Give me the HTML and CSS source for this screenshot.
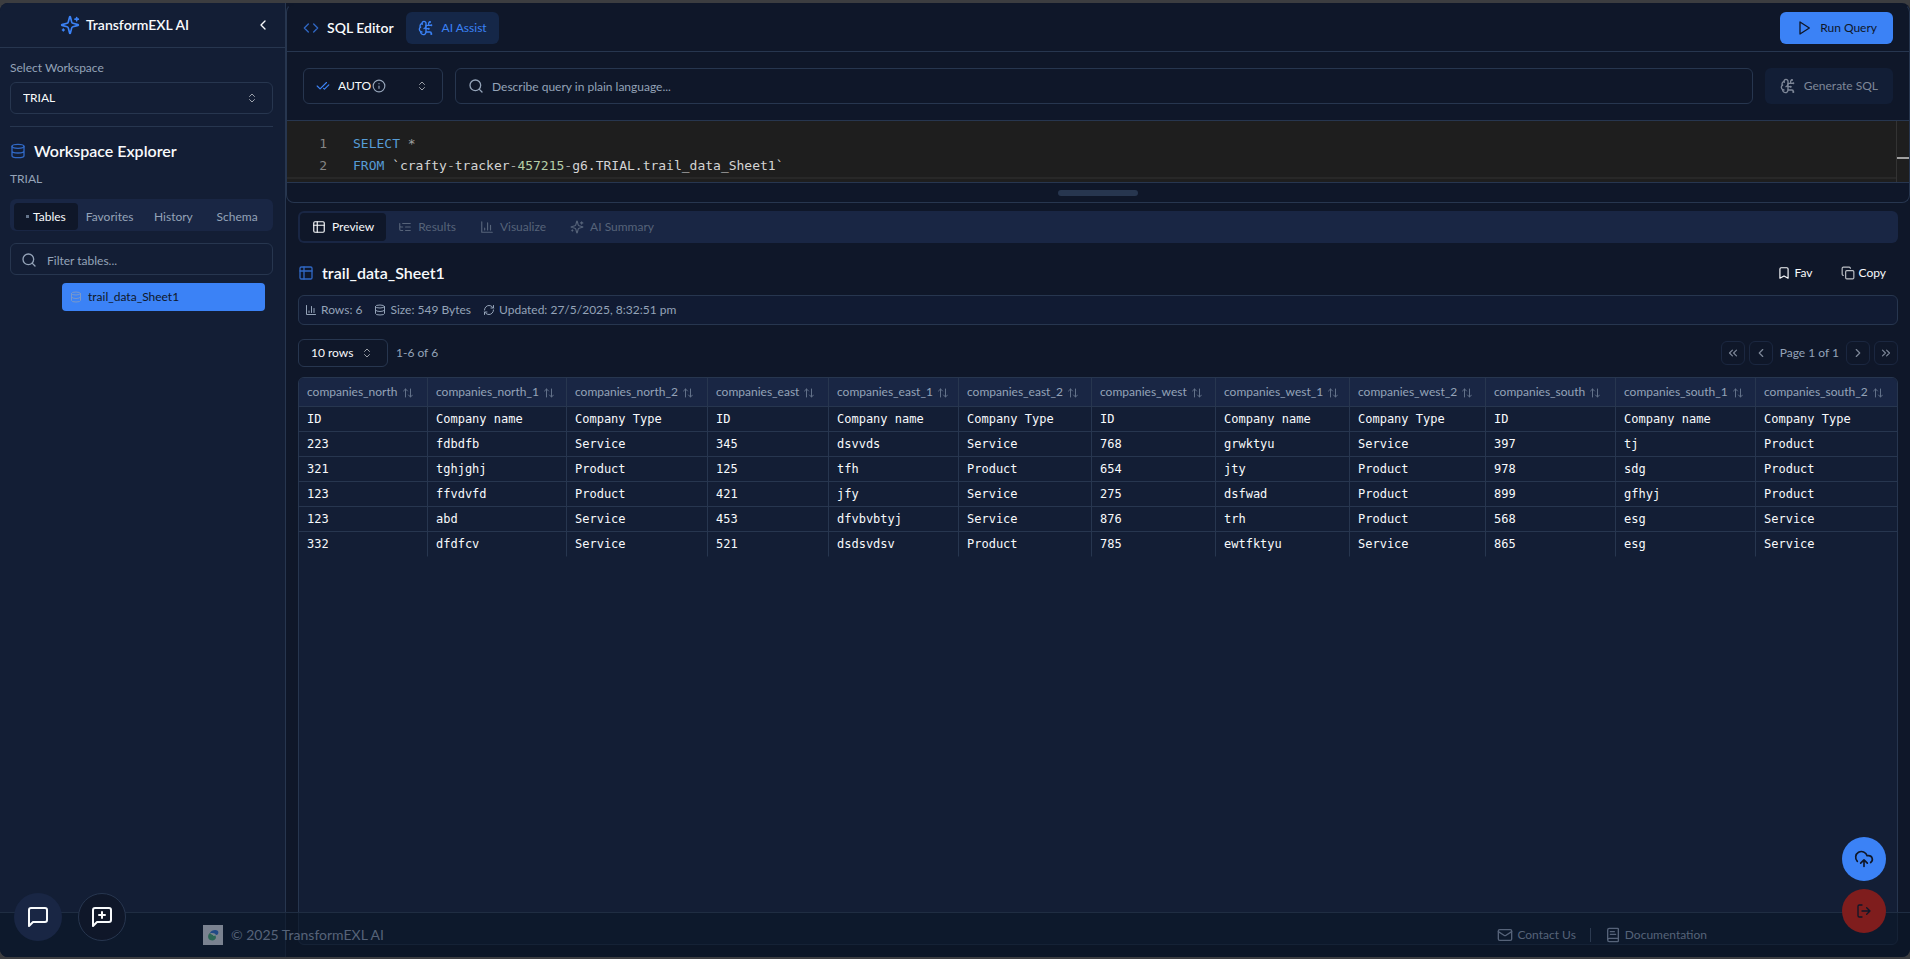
FILE: index.html
```html
<!DOCTYPE html>
<html lang="en">
<head>
  <meta charset="UTF-8">
  <meta name="viewport" content="width=device-width, initial-scale=1">
  <title>TransformEXL AI</title>
  <link rel="stylesheet" href="styles.css">
</head>
<body>
  <!-- icon sprite -->
  <svg class="sprite" aria-hidden="true">
    <symbol id="i-sparkles" viewBox="0 0 24 24"><path d="M9.937 15.5A2 2 0 0 0 8.5 14.063l-6.135-1.582a.5.5 0 0 1 0-.962L8.5 9.936A2 2 0 0 0 9.937 8.5l1.582-6.135a.5.5 0 0 1 .963 0L14.063 8.5A2 2 0 0 0 15.5 9.937l6.135 1.581a.5.5 0 0 1 0 .964L15.5 14.063a2 2 0 0 0-1.437 1.437l-1.582 6.135a.5.5 0 0 1-.963 0z"/><path d="M20 3v4M22 5h-4M4 17v2M5 18H3"/></symbol>
    <symbol id="i-left" viewBox="0 0 24 24"><path d="m15 18-6-6 6-6"/></symbol>
    <symbol id="i-right" viewBox="0 0 24 24"><path d="m9 18 6-6-6-6"/></symbol>
    <symbol id="i-first" viewBox="0 0 24 24"><path d="m11 17-5-5 5-5M18 17l-5-5 5-5"/></symbol>
    <symbol id="i-last" viewBox="0 0 24 24"><path d="m6 17 5-5-5-5M13 17l5-5-5-5"/></symbol>
    <symbol id="i-updown" viewBox="0 0 24 24"><path d="m7 15 5 5 5-5M7 9l5-5 5 5"/></symbol>
    <symbol id="i-db" viewBox="0 0 24 24"><ellipse cx="12" cy="5" rx="9" ry="3"/><path d="M3 5v14a9 3 0 0 0 18 0V5M3 12a9 3 0 0 0 18 0"/></symbol>
    <symbol id="i-search" viewBox="0 0 24 24"><circle cx="11" cy="11" r="8"/><path d="m21 21-4.300-4.300"/></symbol>
    <symbol id="i-code" viewBox="0 0 24 24"><path d="m16 18 6-6-6-6M8 6l-6 6 6 6"/></symbol>
    <symbol id="i-brain" viewBox="0 0 24 24"><path d="M12 5a3 3 0 1 0-5.997.125 4 4 0 0 0-2.526 5.770 4 4 0 0 0 .556 6.588A4 4 0 1 0 12 18Z"/><path d="M9 13a4.500 4.500 0 0 0 3-4M6.003 5.125A3 3 0 0 0 6.401 6.500M3.477 10.896a4 4 0 0 1 .585-.396M6 18a4 4 0 0 1-1.967-.516M12 13h4M12 18h6a2 2 0 0 1 2 2v1M12 8h8M16 8V5a2 2 0 0 1 2-2"/><circle cx="16" cy="13" r=".5"/><circle cx="18" cy="3" r=".5"/><circle cx="20" cy="21" r=".5"/><circle cx="20" cy="8" r=".5"/></symbol>
    <symbol id="i-play" viewBox="0 0 24 24"><path d="m6 3 14 9-14 9z"/></symbol>
    <symbol id="i-checks" viewBox="0 0 24 24"><path d="M18 6 7 17l-5-5M22 10l-7.500 7.500L13 16"/></symbol>
    <symbol id="i-info" viewBox="0 0 24 24"><circle cx="12" cy="12" r="10"/><path d="M12 16v-4M12 8h.01"/></symbol>
    <symbol id="i-table" viewBox="0 0 24 24"><rect x="3" y="3" width="18" height="18" rx="2"/><path d="M9 3v18M3 9h18"/></symbol>
    <symbol id="i-list" viewBox="0 0 24 24"><path d="M21 12h-8M21 6H8M21 18h-8M3 6v4c0 1.100.900 2 2 2h3M3 10v6c0 1.100.900 2 2 2h3"/></symbol>
    <symbol id="i-chart" viewBox="0 0 24 24"><path d="M3 3v18h18M18 17V9M13 17V5M8 17v-3"/></symbol>
    <symbol id="i-bookmark" viewBox="0 0 24 24"><path d="m19 21-7-4-7 4V5a2 2 0 0 1 2-2h10a2 2 0 0 1 2 2z"/></symbol>
    <symbol id="i-copy" viewBox="0 0 24 24"><rect x="8" y="8" width="14" height="14" rx="2"/><path d="M4 16c-1.100 0-2-.900-2-2V4c0-1.100.900-2 2-2h10c1.100 0 2 .900 2 2"/></symbol>
    <symbol id="i-refresh" viewBox="0 0 24 24"><path d="M3 12a9 9 0 0 1 9-9 9.750 9.750 0 0 1 6.740 2.740L21 8M21 3v5h-5M21 12a9 9 0 0 1-9 9 9.750 9.750 0 0 1-6.740-2.740L3 16M8 16H3v5"/></symbol>
    <symbol id="i-sort" viewBox="0 0 24 24"><path d="m3 8 4-4 4 4M7 4v16M21 16l-4 4-4-4M17 20V4"/></symbol>
    <symbol id="i-msg" viewBox="0 0 24 24"><path d="M21 15a2 2 0 0 1-2 2H7l-4 4V5a2 2 0 0 1 2-2h14a2 2 0 0 1 2 2z"/></symbol>
    <symbol id="i-msgplus" viewBox="0 0 24 24"><path d="M21 15a2 2 0 0 1-2 2H7l-4 4V5a2 2 0 0 1 2-2h14a2 2 0 0 1 2 2zM12 7v6M9 10h6"/></symbol>
    <symbol id="i-mail" viewBox="0 0 24 24"><rect x="2" y="4" width="20" height="16" rx="2"/><path d="m22 7-8.970 5.700a1.940 1.940 0 0 1-2.060 0L2 7"/></symbol>
    <symbol id="i-book" viewBox="0 0 24 24"><path d="M4 19.500v-15A2.500 2.500 0 0 1 6.500 2H19a1 1 0 0 1 1 1v18a1 1 0 0 1-1 1H6.500a1 1 0 0 1 0-5H20M8 11h8M8 7h6"/></symbol>
    <symbol id="i-upload" viewBox="0 0 24 24"><path d="M12 13v8M4 14.899A7 7 0 1 1 15.710 8h1.790a4.500 4.500 0 0 1 2.500 8.242M8 17l4-4 4 4"/></symbol>
    <symbol id="i-logout" viewBox="0 0 24 24"><path d="M9 21H5a2 2 0 0 1-2-2V5a2 2 0 0 1 2-2h4M16 17l5-5-5-5M21 12H9"/></symbol>
  </svg>

  <div class="app">
    <aside class="sidebar">
      <div class="sidebar-header">
        <div class="brand"><svg class="icon icon-lg accent"><use href="#i-sparkles"/></svg>TransformEXL AI</div>
        <button class="icon-btn" aria-label="Collapse sidebar"><svg class="icon"><use href="#i-left"/></svg></button>
      </div>
      <div class="sidebar-body">
        <label class="label" for="workspace">Select Workspace</label>
        <div class="select-wrap">
          <select id="workspace"><option>TRIAL</option></select>
          <svg class="icon icon-xs updown"><use href="#i-updown"/></svg>
        </div>
        <hr>
        <h2><svg class="icon accent dim"><use href="#i-db"/></svg>Workspace Explorer</h2>
        <p class="workspace-name">TRIAL</p>
        <div class="side-tabs">
          <button class="active"><span class="dot"></span>Tables</button>
          <button>Favorites</button>
          <button>History</button>
          <button>Schema</button>
        </div>
        <div class="field filter">
          <svg class="icon"><use href="#i-search"/></svg>
          <input type="text" placeholder="Filter tables..." aria-label="Filter tables">
        </div>
        <button class="tree-item"><svg class="icon icon-xs"><use href="#i-db"/></svg>trail_data_Sheet1</button>
      </div>
    </aside>

    <main class="main">
      <section class="editor">
        <div class="editor-header">
          <svg class="icon accent dim"><use href="#i-code"/></svg>
          <h3>SQL Editor</h3>
          <button class="btn btn-assist"><svg class="icon"><use href="#i-brain"/></svg>AI Assist</button>
          <button class="btn btn-run"><svg class="icon"><use href="#i-play"/></svg>Run Query</button>
        </div>
        <div class="prompt-row">
          <div class="select-wrap mode">
            <svg class="icon icon-sm accent"><use href="#i-checks"/></svg>
            <select aria-label="Mode"><option>AUTO</option></select>
            <svg class="icon icon-sm info"><use href="#i-info"/></svg>
            <svg class="icon icon-xs updown"><use href="#i-updown"/></svg>
          </div>
          <div class="field prompt">
            <svg class="icon"><use href="#i-search"/></svg>
            <input type="text" placeholder="Describe query in plain language..." aria-label="Describe query">
          </div>
          <button class="btn btn-generate" disabled><svg class="icon"><use href="#i-brain"/></svg>Generate SQL</button>
        </div>
        <div class="code">
          <div class="code-lines">
            <div class="line"><span class="num">1</span><code><span class="kw">SELECT</span> <span class="op">*</span></code></div>
            <div class="line"><span class="num">2</span><code><span class="kw">FROM</span> `crafty<span class="op">-</span>tracker<span class="op">-</span><span class="lit">457215</span><span class="op">-</span>g6.TRIAL.trail_data_Sheet1`</code></div>
            <div class="line current"></div>
          </div>
          <div class="ruler"><span></span></div>
        </div>
        <div class="resize"><span></span></div>
      </section>

      <section class="results">
        <div class="tabs">
          <button class="active"><svg class="icon icon-sm"><use href="#i-table"/></svg>Preview</button>
          <button><svg class="icon icon-sm"><use href="#i-list"/></svg>Results</button>
          <button><svg class="icon icon-sm"><use href="#i-chart"/></svg>Visualize</button>
          <button><svg class="icon icon-sm"><use href="#i-sparkles"/></svg>AI Summary</button>
        </div>

        <div class="title-row">
          <svg class="icon accent dim"><use href="#i-table"/></svg>
          <h2>trail_data_Sheet1</h2>
          <button class="btn-ghost"><svg class="icon icon-sm"><use href="#i-bookmark"/></svg>Fav</button>
          <button class="btn-ghost"><svg class="icon icon-sm dim"><use href="#i-copy"/></svg>Copy</button>
        </div>

        <div class="stats">
          <span><svg class="icon icon-xs"><use href="#i-chart"/></svg>Rows: 6</span>
          <span><svg class="icon icon-xs"><use href="#i-db"/></svg>Size: 549 Bytes</span>
          <span><svg class="icon icon-xs"><use href="#i-refresh"/></svg>Updated: 27/5/2025, 8:32:51 pm</span>
        </div>

        <div class="pager">
          <div class="select-wrap rows">
            <select aria-label="Rows per page"><option>10 rows</option></select>
            <svg class="icon icon-xs updown"><use href="#i-updown"/></svg>
          </div>
          <span class="range">1-6 of 6</span>
          <button disabled aria-label="First page"><svg class="icon icon-sm"><use href="#i-first"/></svg></button>
          <button disabled aria-label="Previous page"><svg class="icon icon-sm"><use href="#i-left"/></svg></button>
          <span class="page">Page 1 of 1</span>
          <button disabled aria-label="Next page"><svg class="icon icon-sm"><use href="#i-right"/></svg></button>
          <button disabled aria-label="Last page"><svg class="icon icon-sm"><use href="#i-last"/></svg></button>
        </div>

        <div class="table-box">
          <table>
            <colgroup><col><col><col><col><col><col><col><col><col><col><col><col></colgroup>
            <thead><tr id="head"></tr></thead>
            <tbody id="rows"></tbody>
          </table>
        </div>
      </section>
    </main>

    <footer class="footer">
      <div class="footer-inner">
        <svg class="logo" viewBox="0 0 20 20"><rect width="20" height="20" fill="#c3c8d3"/><path d="M7 8c1-3 6-4 8-2 1 2 0 4-2 4-1-2-3-2-6-2z" fill="#2f6cc0"/><path d="M7 8c-2 1-3 5 0 7 3 1 6 0 6-3l-1-2c-2 1-4-1-5-2z" fill="#3f9a72"/><circle cx="11" cy="10" r="1" fill="#b9d8cf"/></svg>
        <span class="copyright">© 2025 TransformEXL AI</span>
        <a href="#"><svg class="icon"><use href="#i-mail"/></svg>Contact Us</a>
        <span class="divider"></span>
        <a href="#"><svg class="icon"><use href="#i-book"/></svg>Documentation</a>
      </div>
    </footer>

    <div class="fab-left">
      <button class="fab chat" aria-label="Chat"><svg class="icon icon-xl"><use href="#i-msg"/></svg></button>
      <button class="fab feedback" aria-label="Feedback"><svg class="icon icon-xl"><use href="#i-msgplus"/></svg></button>
    </div>
    <div class="fab-right">
      <button class="fab upload" aria-label="Upload"><svg class="icon icon-lg"><use href="#i-upload"/></svg></button>
      <button class="fab logout" aria-label="Log out"><svg class="icon"><use href="#i-logout"/></svg></button>
    </div>
  </div>

  <script src="script.js"></script>
</body>
</html>
```
FILE: styles.css
```css
:root {
  --bg: #0f1729;
  --card: #131e35;
  --muted: #192644;
  --border: #27364f;
  --text: #f8fafc;
  --text-muted: #94a3b8;
  --primary: #3b82f6;
  --sans: Lato, "Open Sans", sans-serif;
  --mono: "DejaVu Sans Mono", "Liberation Mono", monospace;
}

* {
  box-sizing: border-box;
}

body {
  margin: 0;
  padding: 3px 0 2px;
  height: 100vh;
  background: #3c3d40;
  color: var(--text);
  font: 12px/16px var(--sans);
}

button, input, select {
  font: inherit;
  color: inherit;
  margin: 0;
}

button {
  display: inline-flex;
  align-items: center;
  justify-content: center;
  border: none;
  padding: 0;
  background: none;
  cursor: pointer;
}

h2, h3, p {
  margin: 0;
}

h2 {
  font-size: 16px;
  line-height: 24px;
  font-weight: 600;
}

.sprite {
  display: none;
}

.icon {
  width: 16px;
  height: 16px;
  flex: none;
  fill: none;
  stroke: currentColor;
  stroke-width: 2;
  stroke-linecap: round;
  stroke-linejoin: round;
}

.icon-xs { width: 12px; height: 12px; }
.icon-sm { width: 14px; height: 14px; }
.icon-lg { width: 20px; height: 20px; }
.icon-xl { width: 24px; height: 24px; }

.accent {
  color: var(--primary);
}

.dim {
  opacity: 0.75;
}

.app {
  position: relative;
  display: flex;
  height: 100%;
  background: var(--bg);
  border-radius: 8px;
  overflow: hidden;
}

/* sidebar */
.sidebar {
  width: 286px;
  flex: none;
  background: var(--card);
  border-right: 1px solid var(--border);
}

.sidebar-header {
  display: flex;
  align-items: center;
  height: 45px;
  padding-right: 8px;
  border-bottom: 1px solid var(--border);
}

.brand {
  flex: 1;
  display: flex;
  align-items: center;
  justify-content: center;
  gap: 6px;
  font-size: 14px;
  font-weight: 600;
}

.icon-btn {
  width: 28px;
  height: 28px;
}

.sidebar-body {
  display: flex;
  flex-direction: column;
  padding: 12px 12px 12px 10px;
}

.label {
  color: var(--text-muted);
  margin-bottom: 6px;
}

.select-wrap {
  display: flex;
  align-items: center;
  height: 32px;
  padding: 0 14px 0 12px;
  border: 1px solid var(--border);
  border-radius: 6px;
  background: none;
}

.select-wrap select {
  flex: 1;
  appearance: none;
  border: none;
  padding: 0;
  background: none;
  outline: none;
}

.updown {
  opacity: 0.6;
}

hr {
  width: 100%;
  height: 1px;
  margin: 12px 0;
  border: none;
  background: var(--border);
}

.sidebar-body h2 {
  display: flex;
  align-items: center;
  gap: 8px;
}

.workspace-name {
  margin: 8px 0 12px;
  color: var(--text-muted);
}

.side-tabs {
  display: grid;
  grid-template-columns: repeat(4, 1fr);
  height: 32px;
  padding: 4px 4px 1px;
  border-radius: 6px;
  background: var(--muted);
  color: var(--text-muted);
}

.side-tabs button,
.tabs button {
  border-radius: 4px;
}

.side-tabs .active,
.tabs .active {
  background: var(--bg);
  color: var(--text);
}

.dot {
  width: 3px;
  height: 3px;
  margin-right: 4px;
  background: #64748b;
}

.field {
  display: flex;
  align-items: center;
  gap: 10px;
  padding: 0 12px;
  border: 1px solid var(--border);
  border-radius: 6px;
  color: var(--text-muted);
}

.field input {
  flex: 1;
  min-width: 0;
  border: none;
  padding: 2px 0 0;
  background: none;
  outline: none;
}

.field input::placeholder {
  color: var(--text-muted);
  opacity: 1;
}

.filter {
  height: 32px;
  margin: 12px 0 8px;
  padding: 2px 10px 0;
}

.tree-item {
  justify-content: flex-start;
  gap: 6px;
  height: 28px;
  margin: 0 8px 0 52px;
  padding: 0 8px;
  border-radius: 4px;
  background: var(--primary);
  color: var(--bg);
}

.tree-item .icon {
  color: var(--text-muted);
  opacity: 0.7;
}

/* editor */
.main {
  flex: 1;
  min-width: 0;
  display: flex;
  flex-direction: column;
}

.editor {
  margin-top: 1px;
  border: 1px solid var(--border);
  border-top-color: var(--bg);
  border-radius: 8px;
  overflow: hidden;
}

.editor-header {
  display: flex;
  align-items: center;
  gap: 8px;
  height: 47px;
  padding: 0 16px;
  border-bottom: 1px solid var(--border);
}

.editor-header h3 {
  font-size: 14px;
  line-height: 20px;
  font-weight: 600;
}

.btn {
  height: 32px;
  gap: 8px;
  padding: 0 12px;
  border-radius: 6px;
}

.btn-assist {
  margin-left: 4px;
  background: #152748;
  color: var(--primary);
}

.btn-run {
  margin-left: auto;
  padding: 0 16px;
  background: var(--primary);
  color: var(--bg);
}

.btn-generate {
  height: 36px;
  padding: 0 15px;
  background: #121e36;
  color: #7e8798;
}

.prompt-row {
  display: flex;
  gap: 12px;
  padding: 16px;
  border-bottom: 1px solid var(--border);
}

.mode {
  width: 140px;
  height: 36px;
}

.mode select {
  flex: none;
  margin-left: 8px;
}

.mode .info {
  color: var(--text-muted);
}

.mode .updown {
  margin-left: auto;
}

.prompt {
  flex: 1;
  gap: 8px;
}

.code {
  display: flex;
  height: 62px;
  background: #1e1e1e;
  border-bottom: 1px solid var(--border);
  font: 13px/22px var(--mono);
  color: #d4d4d4;
  overflow: hidden;
}

.code-lines {
  flex: 1;
  padding-top: 12px;
}

.line {
  display: flex;
  height: 22px;
  padding-left: 20px;
}

.line code {
  font: inherit;
  white-space: pre;
}

.num {
  width: 20px;
  margin-right: 26px;
  text-align: right;
  color: #858585;
}

.current {
  border-top: 2px solid #282828;
}

.kw { color: #569cd6; }
.lit { color: #b5cea8; }
.op { color: #a0a0a0; }

.ruler {
  width: 13px;
  padding-top: 36px;
  border-left: 1px solid #333;
}

.ruler span {
  display: block;
  height: 2px;
  background: #a0a0a0;
}

.resize {
  display: flex;
  align-items: center;
  justify-content: center;
  height: 19px;
}

.resize span {
  width: 80px;
  height: 6px;
  border-radius: 3px;
  background: var(--border);
}

/* results */
.results {
  flex: 1;
  min-height: 0;
  display: flex;
  flex-direction: column;
  padding: 8px 12px 12px;
}

.tabs {
  display: flex;
  height: 32px;
  padding: 2px;
  border-radius: 6px;
  background: var(--muted);
  color: #566379;
}

.tabs button {
  gap: 6px;
  padding: 0 12px;
}

.title-row {
  display: flex;
  align-items: center;
  gap: 4px;
  margin: 16px 0 8px;
}

.title-row h2 {
  flex: 1;
  margin-left: 4px;
}

.btn-ghost {
  gap: 4px;
  height: 28px;
  padding: 0 12px;
}

.stats {
  display: flex;
  align-items: center;
  gap: 12px;
  height: 30px;
  padding: 0 6px;
  border: 1px solid var(--border);
  border-radius: 6px;
  background: #111b33;
  color: var(--text-muted);
}

.stats span {
  display: flex;
  align-items: center;
  gap: 4px;
}

.pager {
  display: flex;
  align-items: center;
  gap: 4px;
  margin: 14px 0 10px;
  color: var(--text-muted);
}

.rows {
  width: 90px;
  height: 28px;
  color: var(--text);
}

.range {
  margin: 0 auto 0 4px;
}

.pager button {
  width: 24px;
  height: 24px;
  border: 1px solid #1b2740;
  border-radius: 6px;
  color: #7e8798;
}

.page {
  margin: 0 3px;
}

.table-box {
  flex: 1;
  border: 1px solid var(--border);
  border-radius: 6px;
  background: var(--card);
  overflow: hidden;
}

table {
  width: 100%;
  table-layout: fixed;
  border-collapse: separate;
  border-spacing: 0;
}

col:nth-child(1) { width: 129px; }
col:nth-child(2) { width: 139px; }
col:nth-child(3) { width: 141px; }
col:nth-child(4) { width: 121px; }
col:nth-child(5) { width: 130px; }
col:nth-child(6) { width: 133px; }
col:nth-child(7) { width: 124px; }
col:nth-child(8) { width: 134px; }
col:nth-child(9) { width: 136px; }
col:nth-child(10) { width: 130px; }
col:nth-child(11) { width: 140px; }
col:nth-child(12) { width: 142px; }

th, td {
  padding: 0 8px;
  text-align: left;
  font-weight: 400;
  white-space: nowrap;
  border-right: 1px solid var(--border);
  border-bottom: 1px solid var(--border);
}

th:last-child, td:last-child {
  border-right: none;
}

th {
  height: 29px;
  background: var(--muted);
  color: var(--text-muted);
}

th .icon {
  margin-left: 1px;
  vertical-align: middle;
  opacity: 0.6;
}

td {
  height: 25px;
  font-family: var(--mono);
}

tbody tr:last-child td {
  border-bottom-color: transparent;
}

/* footer and floating buttons */
.footer {
  position: absolute;
  left: 0;
  right: 0;
  bottom: 0;
  border-top: 1px solid #1f2d42;
  background: rgba(10, 22, 38, 0.6);
  color: #566379;
}

.footer-inner {
  display: flex;
  align-items: center;
  max-width: 1536px;
  height: 44px;
  margin: 0 auto;
  padding: 0 16px;
}

.logo {
  width: 20px;
  height: 20px;
  opacity: 0.6;
}

.copyright {
  margin: 0 auto 0 8px;
  font-size: 14px;
}

.footer a {
  display: flex;
  align-items: center;
  gap: 4px;
  color: inherit;
  text-decoration: none;
}

.divider {
  width: 1px;
  height: 14px;
  margin: 0 14px;
  background: #2c3a50;
}

.fab-left {
  position: absolute;
  left: 14px;
  bottom: 16px;
  display: flex;
  gap: 16px;
}

.fab-right {
  position: absolute;
  right: 24px;
  bottom: 24px;
  display: flex;
  flex-direction: column;
  gap: 8px;
}

.fab {
  width: 48px;
  height: 48px;
  border-radius: 50%;
}

.chat {
  background: var(--muted);
}

.feedback {
  background: var(--bg);
  border: 1px solid var(--border);
}

.fab-right .fab {
  width: 44px;
  height: 44px;
  color: var(--bg);
}

.upload {
  background: var(--primary);
}

.logout {
  background: #7f1d1d;
}
```
FILE: script.js
```js
const columns = [
  "companies_north", "companies_north_1", "companies_north_2",
  "companies_east", "companies_east_1", "companies_east_2",
  "companies_west", "companies_west_1", "companies_west_2",
  "companies_south", "companies_south_1", "companies_south_2"
];

const rows = [
  ["ID", "Company name", "Company Type", "ID", "Company name", "Company Type", "ID", "Company name", "Company Type", "ID", "Company name", "Company Type"],
  ["223", "fdbdfb", "Service", "345", "dsvvds", "Service", "768", "grwktyu", "Service", "397", "tj", "Product"],
  ["321", "tghjghj", "Product", "125", "tfh", "Product", "654", "jty", "Product", "978", "sdg", "Product"],
  ["123", "ffvdvfd", "Product", "421", "jfy", "Service", "275", "dsfwad", "Product", "899", "gfhyj", "Product"],
  ["123", "abd", "Service", "453", "dfvbvbtyj", "Service", "876", "trh", "Product", "568", "esg", "Service"],
  ["332", "dfdfcv", "Service", "521", "dsdsvdsv", "Product", "785", "ewtfktyu", "Service", "865", "esg", "Service"]
];

document.getElementById("head").innerHTML = columns
  .map(name => `<th>${name} <svg class="icon icon-xs"><use href="#i-sort"/></svg></th>`)
  .join("");

document.getElementById("rows").innerHTML = rows
  .map(row => `<tr>${row.map(cell => `<td>${cell}</td>`).join("")}</tr>`)
  .join("");
```
